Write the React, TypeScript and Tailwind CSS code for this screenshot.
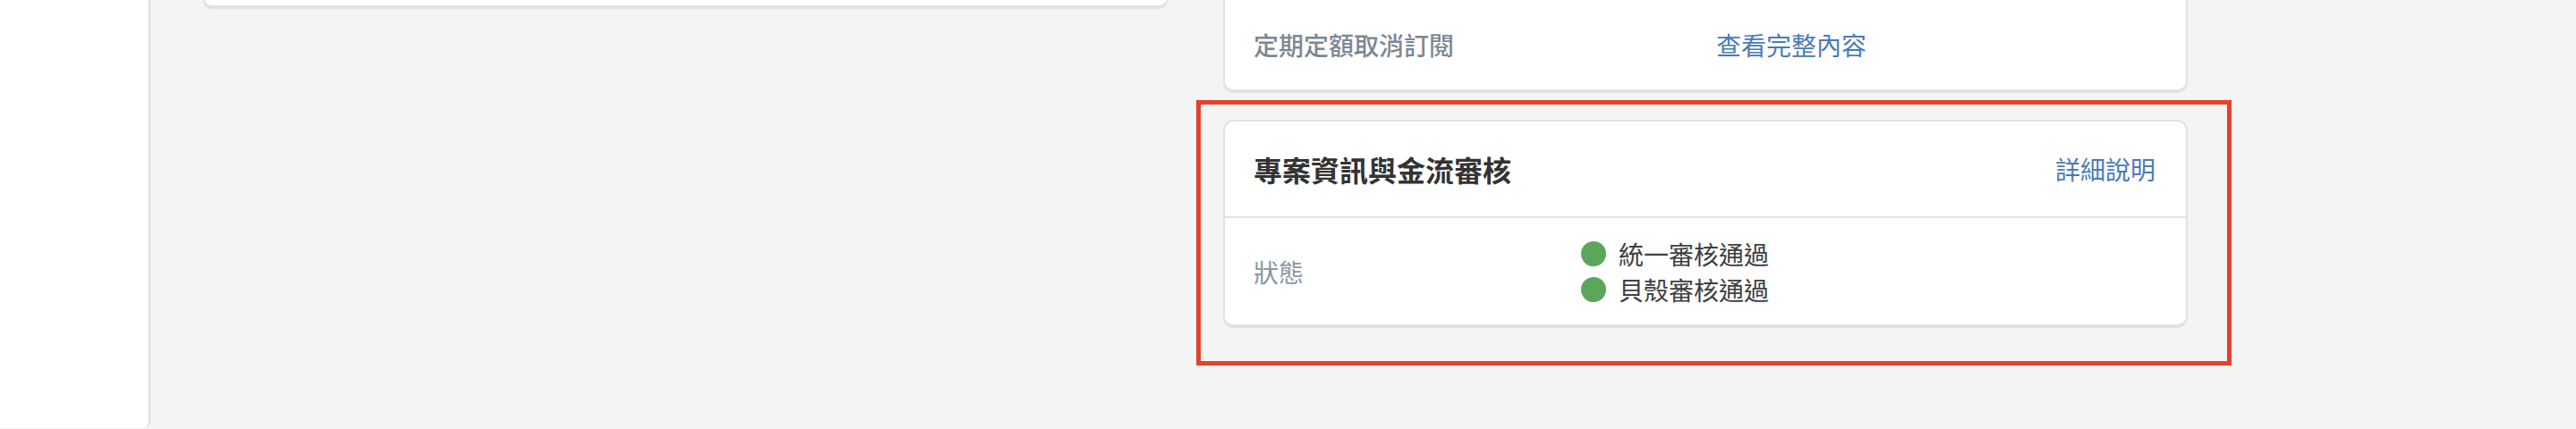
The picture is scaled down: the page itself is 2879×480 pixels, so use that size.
import React from "react";

const font = { fontFamily: '"Noto Sans CJK TC", "Noto Sans", sans-serif' };

function StatusLine({ text }: { text: string }) {
  return (
    <div className="flex items-center gap-[14px] leading-[40px]">
      <span className="h-[28px] w-[28px] rounded-full bg-[#5ba65b]" />
      <span>{text}</span>
    </div>
  );
}

export default function App() {
  return (
    <div style={font} className="flex h-[480px] overflow-hidden bg-[#f4f4f4]">
      <aside className="h-[479px] w-[168px] shrink-0 rounded-br-[8px] border-r-2 border-[#e0e0e0] bg-white" />

      <main className="flex gap-[62px] pl-[59px]">
        <section className="w-[1078px]">
          <div className="h-[10px] rounded-b-[12px] border-x-2 border-b-4 border-[#e2e2e2] bg-white" />
        </section>

        <section className="w-[1078px]">
          <div className="flex h-[104px] items-center rounded-b-[12px] border-x-2 border-b-4 border-[#e2e2e2] bg-white px-8 text-[28px]">
            <span className="w-[517px] font-medium text-[#7b8894]">定期定額取消訂閱</span>
            <a className="text-[#4a7ab8]">查看完整內容</a>
          </div>

          <div className="relative mt-[30px]">
            <div className="rounded-[12px] border-2 border-b-4 border-[#e2e2e2] bg-white">
              <div className="flex h-[108px] items-center justify-between border-b-2 border-[#e2e2e2] pl-8 pr-[34px]">
                <h2 className="text-[32px] font-bold text-[#333]">專案資訊與金流審核</h2>
                <a className="text-[28px] text-[#4a7ab8]">詳細說明</a>
              </div>
              <div className="flex h-[119px] items-center px-8 text-[28px]">
                <span className="w-[366px] text-[#8a96a2]">狀態</span>
                <div className="flex flex-col text-[#3c4043]">
                  <StatusLine text="統一審核通過" />
                  <StatusLine text="貝殼審核通過" />
                </div>
              </div>
            </div>
            <div className="pointer-events-none absolute -top-[22px] -right-[49px] -bottom-[42px] -left-[30px] border-[5px] border-[#e8412b]" />
          </div>
        </section>
      </main>
    </div>
  );
}
